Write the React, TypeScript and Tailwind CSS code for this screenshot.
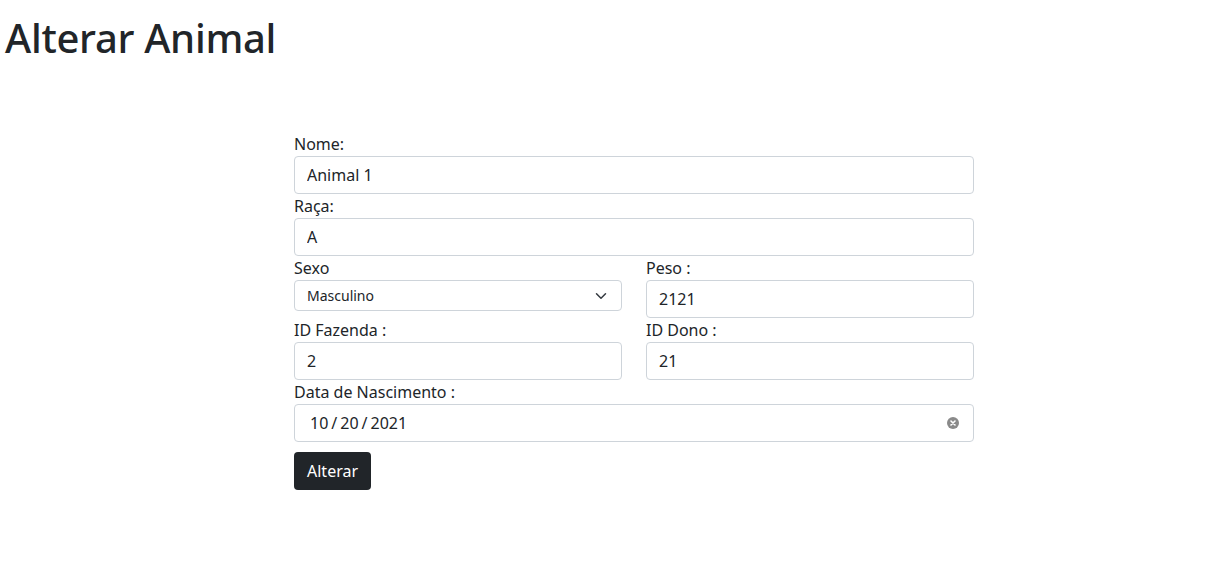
import React from 'react';

const font = { fontFamily: '"Noto Sans", "Open Sans", sans-serif' };

const inputCls =
  'block w-full h-[38px] px-3 border border-[#ced4da] rounded-[4px] bg-white text-[16px] text-[#212529] outline-none';

const Field: React.FC<{ label: string; value: string }> = ({ label, value }) => (
  <div>
    <label className="block text-[16px] leading-6 text-[#212529]">{label}</label>
    <input className={inputCls} defaultValue={value} readOnly />
  </div>
);

export default function App() {
  return (
    <div className="min-h-[582px] bg-white text-[#212529]" style={font}>
      <h1 className="pl-[5px] pt-[14px] text-[40px] leading-[48px] font-medium tracking-[-0.3px]">Alterar Animal</h1>

      <form className="w-[680px] mt-[70px] ml-[294px]" onSubmit={(e) => e.preventDefault()}>
        <Field label="Nome:" value="Animal 1" />
        <Field label="Raça:" value="A" />

        <div className="grid grid-cols-2 gap-x-6">
          <div>
            <label className="block text-[16px] leading-6">Sexo</label>
            <div className="relative">
              <select
                className="block w-full h-[31px] pl-3 pr-8 border border-[#ced4da] rounded-[4px] bg-white text-[14px] text-[#212529] appearance-none outline-none"
                defaultValue="M"
              >
                <option value="M">Masculino</option>
                <option value="F">Feminino</option>
              </select>
              <svg
                className="absolute right-[14px] top-[10px] pointer-events-none"
                width="14"
                height="12"
                viewBox="0 0 16 16"
                fill="none"
                stroke="#343a40"
                strokeWidth="2"
                strokeLinecap="round"
                strokeLinejoin="round"
              >
                <path d="M2 5l6 6 6-6" />
              </svg>
            </div>
          </div>
          <Field label="Peso :" value="2121" />
          <Field label="ID Fazenda :" value="2" />
          <Field label="ID Dono :" value="21" />
        </div>

        <div>
          <label className="block text-[16px] leading-6">Data de Nascimento :</label>
          <div className="flex items-center h-[38px] pl-[15px] pr-[14px] border border-[#ced4da] rounded-[4px] bg-white text-[16px]">
            <span className="flex-1">
              10<span className="mx-[3px]">/</span>20<span className="mx-[3px]">/</span>2021
            </span>
            <svg width="12" height="12" viewBox="0 0 12 12">
              <circle cx="6" cy="6" r="6" fill="#8a8a8a" />
              <path d="M4 4l4 4M8 4l-4 4" stroke="#fff" strokeWidth="1.6" strokeLinecap="round" />
            </svg>
          </div>
        </div>

        <button
          type="submit"
          className="mt-[10px] h-[38px] px-[13px] bg-[#212529] text-white text-[16px] rounded-[4px]"
        >
          Alterar
        </button>
      </form>
    </div>
  );
}
